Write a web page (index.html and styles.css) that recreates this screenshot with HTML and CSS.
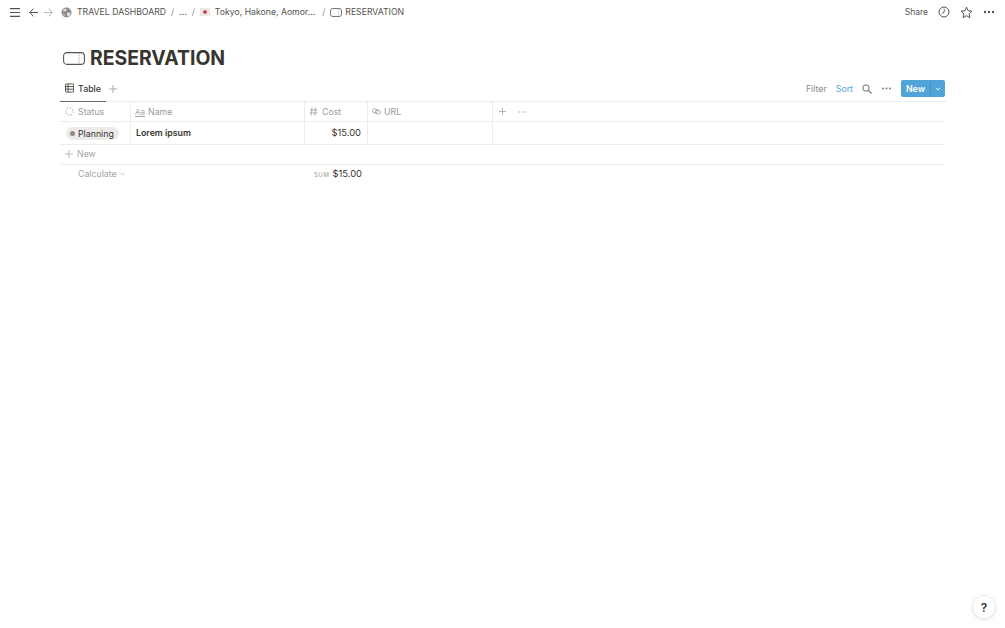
FILE: index.html
```html
<!DOCTYPE html>
<html lang="en">
<head>
<meta charset="utf-8">
<title>RESERVATION</title>
<link rel="stylesheet" href="styles.css">
</head>
<body>
<div class="page">
  <header class="topbar">
    <div class="crumbs">
      <svg class="ic menu" width="10" height="9" viewBox="0 0 10 9"><path d="M0 .6h10M0 4.500h10M0 8.400h10" stroke="#55534e" stroke-width="1.1"/></svg>
      <svg class="ic back" width="9" height="9" viewBox="0 0 9 9"><path d="M9 4.500H.8M4.400.6.800 4.500l3.600 3.900" fill="none" stroke="#55534e" stroke-width="1"/></svg>
      <svg class="ic fwd" width="9" height="9" viewBox="0 0 9 9"><path d="M0 4.500h8.200M4.600.6l3.600 3.900-3.600 3.900" fill="none" stroke="#b9b8b5" stroke-width="1"/></svg>
      <svg class="ic globe" width="11" height="11" viewBox="0 0 11 11"><circle cx="5.500" cy="5.500" r="5" fill="#8c8b88"/><path d="M2 3.200l2.200-1.700 1.600 1-1 1.600-1.600.4zM6.500 5.500l3 .2-.8 3-2 .6-1-2.200zM1.200 6.500l2 .6.800 2.200" fill="#e4e4e2"/></svg>
      <span class="crumb">TRAVEL DASHBOARD</span>
      <span class="sep">/</span>
      <span class="crumb dots">...</span>
      <span class="sep">/</span>
      <svg class="ic flag" width="10" height="8" viewBox="0 0 10 8"><rect width="10" height="8" fill="#ece6e6"/><circle cx="5" cy="4" r="1.800" fill="#c8233f"/></svg>
      <span class="crumb">Tokyo, Hakone, Aomor...</span>
      <span class="sep wide">/</span>
      <svg class="ic ticket" width="12" height="9" viewBox="0 0 12 9"><rect x=".5" y=".5" width="11" height="8" rx="2.200" fill="none" stroke="#55534e" stroke-width=".8"/><path d="M8.800 .8v7.400" stroke="#8c8b88" stroke-width=".6" stroke-dasharray="1 .8"/></svg>
      <span class="crumb last">RESERVATION</span>
    </div>
    <div class="actions">
      <span class="share">Share</span>
      <svg width="12" height="12" viewBox="0 0 12 12"><circle cx="6" cy="6" r="5" fill="none" stroke="#55534e" stroke-width="1"/><path d="M6.200 2.800V6.200L3.800 7.400" fill="none" stroke="#55534e" stroke-width=".9"/></svg>
      <svg width="13" height="13" viewBox="0 0 13 13"><path d="M6.500 1.200l1.600 3.600 3.900.4-2.900 2.600.8 3.900-3.400-2-3.400 2 .8-3.900L1 5.200l3.900-.4z" fill="none" stroke="#55534e" stroke-width="1"/></svg>
      <svg width="12" height="4" viewBox="0 0 12 4"><circle cx="2" cy="2" r="1.200" fill="#55534e"/><circle cx="6" cy="2" r="1.200" fill="#55534e"/><circle cx="10" cy="2" r="1.200" fill="#55534e"/></svg>
    </div>
  </header>

  <main class="content">
    <h1 class="title">
      <svg width="22" height="13" viewBox="0 0 22 13"><rect x=".6" y=".6" width="20.800" height="11.800" rx="3.400" fill="none" stroke="#55534e" stroke-width="1.100"/><path d="M16 1v11" stroke="#8c8b88" stroke-width=".8" stroke-dasharray="1.200 1"/></svg>
      <span>RESERVATION</span>
    </h1>

    <div class="toolbar">
      <div class="tabs">
        <div class="tab">
          <svg width="10" height="10" viewBox="0 0 10 10"><rect x=".5" y=".5" width="9" height="9" rx="1" fill="none" stroke="#37352f" stroke-width=".9"/><path d="M.5 3.400h9M.5 6.300h9M3.400.5v9" stroke="#37352f" stroke-width=".9"/></svg>
          <span>Table</span>
        </div>
        <svg class="tab-add" width="8" height="8" viewBox="0 0 8 8"><path d="M4 0v8M0 4h8" stroke="#a6a5a2" stroke-width=".9"/></svg>
      </div>
      <div class="tools">
        <span class="tool">Filter</span>
        <span class="tool sort">Sort</span>
        <svg class="search" width="10" height="10" viewBox="0 0 10 10"><circle cx="4" cy="4" r="3.200" fill="none" stroke="#6f6e6a" stroke-width="1"/><path d="M6.300 6.300 9.500 9.500" stroke="#6f6e6a" stroke-width="1.100"/></svg>
        <svg class="more" width="9" height="3" viewBox="0 0 9 3"><circle cx="1" cy="1.500" r=".9" fill="#6f6e6a"/><circle cx="4.500" cy="1.500" r=".9" fill="#6f6e6a"/><circle cx="8" cy="1.500" r=".9" fill="#6f6e6a"/></svg>
        <div class="new-btn">
          <span class="new-label">New</span>
          <span class="new-caret"><svg width="6" height="4" viewBox="0 0 6 4"><path d="M.6.7 3 3.100 5.400.7" fill="none" stroke="#fff" stroke-width=".9"/></svg></span>
        </div>
      </div>
    </div>

    <div class="table">
      <div class="row head">
        <div class="cell c-status">
          <svg width="9" height="9" viewBox="0 0 9 9"><circle cx="4.500" cy="4.500" r="3.700" fill="none" stroke="#b5b4b1" stroke-width="1.100" stroke-dasharray="1.300 1.600"/></svg>
          <span>Status</span>
        </div>
        <div class="cell c-name">
          <span class="aa">Aa</span>
          <span>Name</span>
        </div>
        <div class="cell c-cost">
          <svg width="9" height="9" viewBox="0 0 9 9"><path d="M3 .5 2.400 8.500M6.500.5 5.900 8.500M.6 3h8M.4 6h8" stroke="#a6a5a2" stroke-width=".9"/></svg>
          <span>Cost</span>
        </div>
        <div class="cell c-url">
          <svg width="9" height="7" viewBox="0 0 9 7"><ellipse cx="3" cy="3" rx="2.600" ry="2.100" fill="none" stroke="#a6a5a2" stroke-width=".9" transform="rotate(20 3 3)"/><ellipse cx="6" cy="4" rx="2.600" ry="2.100" fill="none" stroke="#a6a5a2" stroke-width=".9" transform="rotate(20 6 4)"/></svg>
          <span>URL</span>
        </div>
        <div class="cell c-add">
          <svg width="7" height="7" viewBox="0 0 7 7"><path d="M3.500 0v7M0 3.500h7" stroke="#a6a5a2" stroke-width=".8"/></svg>
          <svg width="8" height="2" viewBox="0 0 8 2"><circle cx="1" cy="1" r=".7" fill="#a6a5a2"/><circle cx="4" cy="1" r=".7" fill="#a6a5a2"/><circle cx="7" cy="1" r=".7" fill="#a6a5a2"/></svg>
        </div>
      </div>
      <div class="row body">
        <div class="cell c-status"><span class="tag"><i class="dot"></i>Planning</span></div>
        <div class="cell c-name"><span class="page-name">Lorem ipsum</span></div>
        <div class="cell c-cost num">$15.00</div>
        <div class="cell c-url"></div>
        <div class="cell c-add"></div>
      </div>
      <div class="row add-row">
        <svg width="8" height="8" viewBox="0 0 8 8"><path d="M4 0v8M0 4h8" stroke="#b5b4b1" stroke-width=".9"/></svg>
        <span>New</span>
      </div>
      <div class="row calc">
        <div class="c-status calc-label">
          <span>Calculate</span>
          <svg width="5" height="4" viewBox="0 0 5 4"><path d="M.4.8 2.500 3 4.600.8" fill="none" stroke="#b5b4b1" stroke-width=".7"/></svg>
        </div>
        <div class="c-name"></div>
        <div class="c-cost sum"><small>SUM</small><span>$15.00</span></div>
      </div>
    </div>
  </main>
  <button class="help">?</button>
</div>
</body>
</html>
```
FILE: styles.css
```css
* { box-sizing: border-box; }
html, body { margin: 0; height: 100%; }
body {
  font-family: Inter, "Liberation Sans", sans-serif;
  color: #37352f;
  background: #fff;
  overflow: hidden;
}
.page { height: 628px; position: relative; }
.topbar {
  height: 24px;
  display: flex;
  align-items: center;
  justify-content: space-between;
  padding: 0 10px 0 10px;
  font-size: 8.7px;
  color: #55534e;
}
.crumbs { display: flex; align-items: center; }
.ic { flex: none; }
.back { margin-left: 9px; }
.fwd { margin-left: 6px; }
.globe { margin-left: 8px; }
.crumb { margin-left: 5px; white-space: nowrap; }
.sep { margin: 0 0 0 5px; color: #8c8b88; }
.dots { margin-left: 5px; }
.sep.wide { margin-left: 7px; }
.flag { margin-left: 5px; }
.ticket { margin-left: 5px; }
.crumb.last { margin-left: 3px; }
.actions { display: flex; align-items: center; gap: 10px; }
.share { font-size: 8.5px; }
.content { padding: 0 60px; }
.title {
  margin: 0;
  height: 52px;
  padding: 16px 0 0 3px;
  display: flex;
  align-items: center;
  gap: 5px;
  font-size: 19.4px;
  font-weight: 700;
  color: #37352f;
}
.toolbar {
  height: 26px;
  display: flex;
  justify-content: space-between;
  font-size: 8.8px;
  border-bottom: 1px solid #ededec;
}
.tabs { display: flex; align-items: center; }
.tab {
  height: 26px;
  display: flex;
  align-items: center;
  gap: 4px;
  padding: 0 5px;
  width: 46px;
  border-bottom: 1px solid #6b6a66;
  font-weight: 500;
}
.tab-add { margin-left: 3px; }
.tools { display: flex; align-items: center; color: #8c8b88; }
.tool { margin-right: 9px; }
.sort { color: #4ea5d9; margin-right: 9px; }
.more { margin-left: 10px; margin-right: 10px; }
.new-btn {
  display: flex;
  width: 44px;
  height: 17px;
  border-radius: 2px;
  overflow: hidden;
  background: #50a4d8;
  color: #fff;
  font-weight: 600;
}
.new-label { flex: 1; display: flex; align-items: center; justify-content: center; }
.new-caret {
  width: 15px;
  display: flex;
  align-items: center;
  justify-content: center;
  border-left: 1px solid #4795c6;
}
.table { font-size: 8.8px; }
.row { display: flex; border-bottom: 1px solid #ededec; }
.head { height: 20px; color: #9b9a97; }
.body { height: 23px; }
.cell {
  display: flex;
  align-items: center;
  gap: 4px;
  padding: 0 5px;
  border-right: 1px solid #ededec;
}
.body .cell { padding-bottom: 2px; }
.head .c-name, .head .c-cost, .head .c-url { padding-left: 4px; }
.head .c-name, .head .c-url { gap: 3px; }
.c-status { width: 71px; flex: none; }
.c-name { width: 174px; flex: none; }
.c-cost { width: 63px; flex: none; }
.c-url { width: 125px; flex: none; }
.c-add { flex: 1; border-right: 0; gap: 12px; padding: 0 6px; }
.aa { font-size: 8px; text-decoration: underline; color: #a6a5a2; }
.tag {
  display: inline-flex;
  align-items: center;
  gap: 3px;
  height: 13px;
  margin: 2px 0 0 1px;
  padding: 0 5px 0 4px;
  border-radius: 7px;
  background: #ecebea;
  color: #37352f;
}
.dot { width: 5px; height: 5px; border-radius: 50%; background: #8c8b88; }
.page-name { font-weight: 600; }
.num { justify-content: flex-end; font-size: 9.4px; padding-right: 6px; }
.add-row {
  height: 20px;
  align-items: center;
  gap: 4px;
  padding: 0 0 2px 5px;
  color: #a6a5a2;
}
.calc { height: 20px; border-bottom: 0; align-items: center; padding-bottom: 3px; }
.calc-label {
  display: flex;
  align-items: center;
  gap: 3px;
  padding-left: 18px;
  color: #a6a5a2;
}
.sum { display: flex; justify-content: flex-end; align-items: baseline; gap: 3px; padding-right: 6px; font-size: 9.4px; }
.sum small { font-size: 6px; letter-spacing: .6px; color: #9b9a97; }
.help {
  position: absolute;
  right: 9px;
  bottom: 9px;
  width: 24px;
  height: 24px;
  padding: 0;
  border: 1px solid #ededec;
  border-radius: 50%;
  background: #fff;
  box-shadow: 0 1px 3px rgba(0,0,0,.1);
  font: 600 12px Inter, "Liberation Sans", sans-serif;
  color: #37352f;
}
```
